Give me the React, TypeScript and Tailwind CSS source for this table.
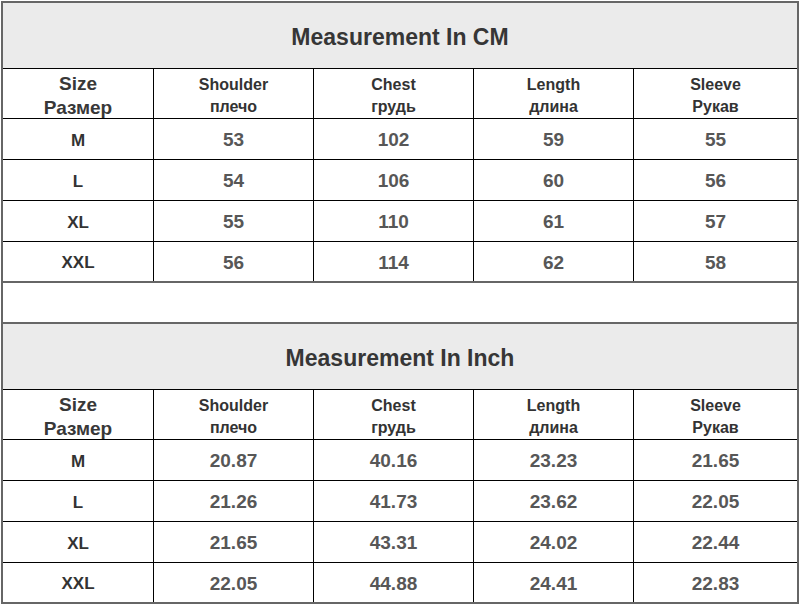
import React from 'react';

type Section = {
  title: string;
  rows: { size: string; values: string[] }[];
};

const columns = [
  ['Shoulder', 'плечо'],
  ['Chest', 'грудь'],
  ['Length', 'длина'],
  ['Sleeve', 'Рукав'],
];

const cm: Section = {
  title: 'Measurement In CM',
  rows: [
    { size: 'M', values: ['53', '102', '59', '55'] },
    { size: 'L', values: ['54', '106', '60', '56'] },
    { size: 'XL', values: ['55', '110', '61', '57'] },
    { size: 'XXL', values: ['56', '114', '62', '58'] },
  ],
};

const inch: Section = {
  title: 'Measurement In Inch',
  rows: [
    { size: 'M', values: ['20.87', '40.16', '23.23', '21.65'] },
    { size: 'L', values: ['21.26', '41.73', '23.62', '22.05'] },
    { size: 'XL', values: ['21.65', '43.31', '24.02', '22.44'] },
    { size: 'XXL', values: ['22.05', '44.88', '24.41', '22.83'] },
  ],
};

const grid = 'grid grid-cols-[151px_160px_160px_160px_1fr]';

function SizeTable({ section }: { section: Section }) {
  return (
    <div className="flex flex-col">
      {/* Title band */}
      <div className="h-[66px] flex items-center justify-center bg-[#ebebeb] border-b border-black pt-1">
        <span className="text-[23px] font-bold text-[#363636]">{section.title}</span>
      </div>

      {/* Column heads */}
      <div className={`${grid} h-[50px] border-b border-black`}>
        <div className="flex flex-col items-center justify-center pt-[3px] border-r border-black text-[19px] leading-[24px] font-bold text-[#383838]">
          <span>Size</span>
          <span>Размер</span>
        </div>
        {columns.map(([en, ru], i) => (
          <div
            key={en}
            className={`flex flex-col items-center justify-center pt-[3px] text-[16px] leading-[22px] font-bold text-[#333] ${i < 3 ? 'border-r border-black' : ''}`}
          >
            <span>{en}</span>
            <span>{ru}</span>
          </div>
        ))}
      </div>

      {/* Data rows */}
      {section.rows.map((row, r) => (
        <div
          key={row.size}
          className={`${grid} ${r < 3 ? 'h-[41px] border-b border-black' : 'h-[39px]'}`}
        >
          <div className="flex items-center justify-center pt-[3px] border-r border-black text-[17px] font-bold text-[#333]">
            {row.size}
          </div>
          {row.values.map((v, i) => (
            <div
              key={i}
              className={`flex items-center justify-center pt-[3px] text-[19px] font-bold text-[#575757] ${i < 3 ? 'border-r border-black' : ''}`}
            >
              {v}
            </div>
          ))}
        </div>
      ))}
    </div>
  );
}

export default function App() {
  return (
    <div className="w-[800px] h-[605px] bg-white" style={{ fontFamily: '"Liberation Sans", Arial, sans-serif' }}>
      <div className="ml-px mt-px w-[798px] h-[603px] border-2 border-[#666] flex flex-col">
        <SizeTable section={cm} />
        {/* Spacer band between the two tables */}
        <div className="h-[43px] border-y-2 border-[#666]" />
        <SizeTable section={inch} />
      </div>
    </div>
  );
}
